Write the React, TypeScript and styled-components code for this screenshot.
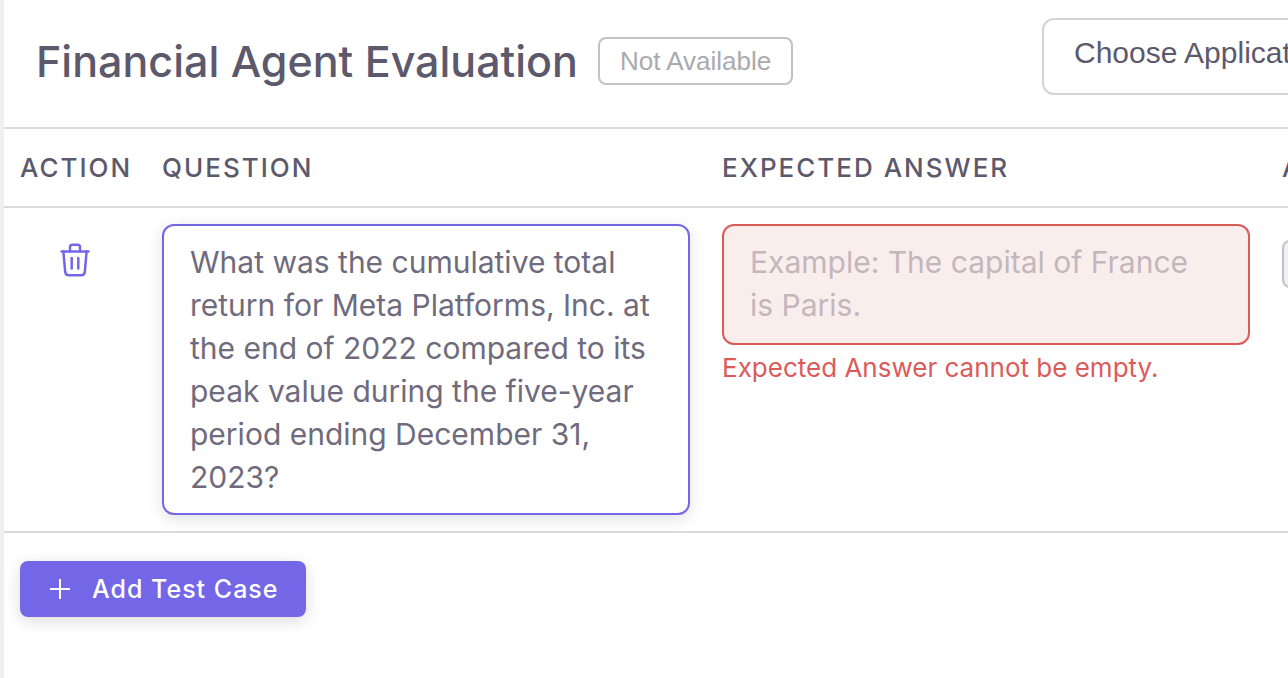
import React, { useState } from "react";
import styled, { createGlobalStyle } from "styled-components";

const colors = {
  page: "#efeef4",
  heading: "#5d596c",
  body: "#6f6b7d",
  primary: "#7367e8",
  danger: "#db5b59",
  divider: "#dbdbdd",
};

const GlobalStyle = createGlobalStyle`
  *, *::before, *::after { box-sizing: border-box; }
  body {
    margin: 0;
    background: #ffffff;
    color: ${colors.body};
    font-family: Inter, "Liberation Sans", sans-serif;
    overflow-x: hidden;
  }
`;

const Page = styled.div`
  display: flex;
  min-height: 100vh;
  padding-left: 4px;
  background: ${colors.page};
  overflow: hidden;
`;

const Panel = styled.main`
  flex: 1;
  min-width: 1418px;
  background: #ffffff;
`;

const Header = styled.header`
  display: flex;
  align-items: flex-start;
  justify-content: space-between;
  padding: 18px 32px 32px;
  border-bottom: 2px solid ${colors.divider};
`;

const TitleGroup = styled.div`
  display: flex;
  align-items: center;
  gap: 20px;
  padding-top: 15px;
`;

const Title = styled.h1`
  margin: 0;
  color: ${colors.heading};
  font-size: 43px;
  font-weight: 500;
  line-height: 56px;
  white-space: nowrap;
`;

const Status = styled.span<{ $filled?: boolean }>`
  display: inline-flex;
  align-items: center;
  height: 48px;
  padding: 0 20px;
  border: 2px solid #c2c1c8;
  border-radius: 8px;
  background: ${(p) => (p.$filled ? "#f0f0f0" : "transparent")};
  color: #aaaaae;
  font-family: "Liberation Sans", Arial, sans-serif;
  font-size: 26px;
  white-space: nowrap;
`;

const ApplicationSelect = styled.select`
  appearance: none;
  width: 348px;
  height: 77px;
  padding: 0 30px 8px;
  border: 2px solid #d4d4d5;
  border-radius: 12px;
  background: #ffffff;
  color: ${colors.heading};
  font-family: "Liberation Sans", Arial, sans-serif;
  font-size: 30px;
`;

const Table = styled.table`
  width: 100%;
  table-layout: fixed;
  border-collapse: separate;
  border-spacing: 0;
`;

const ActionCol = styled.col`
  width: 142px;
`;

const FieldCol = styled.col`
  width: 560px;
`;

const HeadCell = styled.th`
  height: 79px;
  padding: 0 16px;
  border-bottom: 2px solid ${colors.divider};
  color: ${colors.heading};
  font-size: 26px;
  font-weight: 500;
  letter-spacing: 2px;
  text-align: left;
  text-transform: uppercase;
  white-space: nowrap;
`;

const Cell = styled.td<{ $top?: number; $center?: boolean }>`
  padding: ${(p) => p.$top ?? 16}px 16px 16px;
  border-bottom: 2px solid ${colors.divider};
  text-align: ${(p) => (p.$center ? "center" : "left")};
  vertical-align: top;
`;

const IconButton = styled.button`
  display: inline-flex;
  padding: 0;
  border: 0;
  background: none;
  color: ${colors.primary};
  cursor: pointer;
`;

const Field = styled.textarea<{ $invalid?: boolean }>`
  display: block;
  width: 100%;
  min-height: 121px;
  padding: 15px 32px 14px 26px;
  border: 2px solid ${(p) => (p.$invalid ? colors.danger : colors.primary)};
  border-radius: 12px;
  outline: none;
  resize: none;
  overflow: hidden;
  background: ${(p) => (p.$invalid ? "#faeeed" : "#ffffff")};
  box-shadow: ${(p) => (p.$invalid ? "none" : "0 4px 16px rgba(0, 0, 0, 0.12)")};
  color: ${colors.body};
  font-family: inherit;
  font-size: 30px;
  line-height: 43px;

  &::placeholder {
    color: #c3b7bd;
    opacity: 1;
  }
`;

const ErrorText = styled.p`
  margin: 7px 0 0;
  color: ${colors.danger};
  font-size: 26px;
  line-height: 32px;
`;

const Footer = styled.div`
  padding: 28px 16px;
`;

const AddButton = styled.button`
  display: inline-flex;
  align-items: center;
  gap: 20px;
  height: 56px;
  padding: 0 28px;
  border: 0;
  border-radius: 8px;
  background: ${colors.primary};
  box-shadow: 0 4px 16px rgba(0, 0, 0, 0.14);
  color: #ffffff;
  font-family: inherit;
  font-size: 25px;
  font-weight: 500;
  letter-spacing: 1px;
  cursor: pointer;
`;

const TrashIcon = () => (
  <svg width="32" height="36" viewBox="0 0 32 36" fill="none" stroke="currentColor" strokeWidth="2.5" strokeLinecap="round" strokeLinejoin="round" aria-hidden="true">
    <path d="M2.6 9.6H29.4" />
    <path d="M4.4 9.6L6.2 29.8C6.4 32.2 7.6 33.3 10 33.3H22C24.4 33.3 25.6 32.2 25.8 29.8L27.6 9.6" />
    <path d="M11 9.6V5C11 3.500 11.800 2.700 13.300 2.700H18.700C20.200 2.700 21 3.500 21 5V9.600" />
    <path d="M12.700 16V26.500M19.300 16V26.500" />
  </svg>
);

const PlusIcon = () => (
  <svg width="24" height="24" viewBox="0 0 24 24" stroke="currentColor" strokeWidth="2" aria-hidden="true">
    <path d="M2 12H22M12 2V22" />
  </svg>
);

const initialQuestion =
  "What was the cumulative total return for Meta Platforms, Inc. at the end of 2022 compared to its peak value during the five-year period ending December 31, 2023?";

export default function App() {
  const [question, setQuestion] = useState(initialQuestion);
  const [answer, setAnswer] = useState("");
  const invalid = answer.trim() === "";

  return (
    <>
      <GlobalStyle />
      <Page>
        <Panel>
          <Header>
            <TitleGroup>
              <Title>Financial Agent Evaluation</Title>
              <Status>Not Available</Status>
            </TitleGroup>
            <ApplicationSelect aria-label="Application" defaultValue="">
              <option value="">Choose Application</option>
            </ApplicationSelect>
          </Header>
          <Table>
            <colgroup>
              <ActionCol />
              <FieldCol />
              <FieldCol />
              <col />
            </colgroup>
            <thead>
              <tr>
                <HeadCell scope="col">Action</HeadCell>
                <HeadCell scope="col">Question</HeadCell>
                <HeadCell scope="col">Expected Answer</HeadCell>
                <HeadCell scope="col">Actual</HeadCell>
              </tr>
            </thead>
            <tbody>
              <tr>
                <Cell $center $top={34}>
                  <IconButton type="button" aria-label="Delete test case">
                    <TrashIcon />
                  </IconButton>
                </Cell>
                <Cell>
                  <Field
                    aria-label="Question"
                    rows={6}
                    value={question}
                    onChange={(e) => setQuestion(e.target.value)}
                  />
                </Cell>
                <Cell>
                  <Field
                    $invalid={invalid}
                    aria-label="Expected Answer"
                    aria-invalid={invalid}
                    aria-describedby="answer-error"
                    rows={2}
                    placeholder="Example: The capital of France is Paris."
                    value={answer}
                    onChange={(e) => setAnswer(e.target.value)}
                  />
                  {invalid && <ErrorText id="answer-error">Expected Answer cannot be empty.</ErrorText>}
                </Cell>
                <Cell $top={32}>
                  <Status $filled>N/A</Status>
                </Cell>
              </tr>
            </tbody>
          </Table>
          <Footer>
            <AddButton type="button">
              <PlusIcon />
              Add Test Case
            </AddButton>
          </Footer>
        </Panel>
      </Page>
    </>
  );
}
